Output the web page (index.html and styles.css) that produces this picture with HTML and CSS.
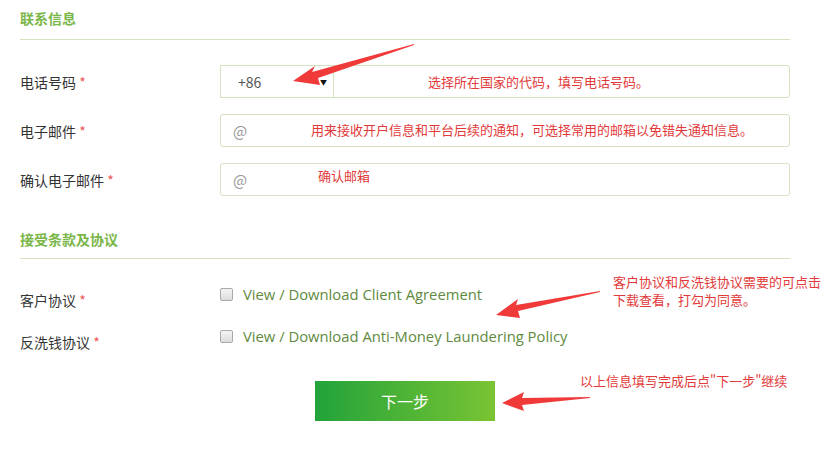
FILE: index.html
```html
<!DOCTYPE html>
<html lang="zh">
<head>
<meta charset="utf-8">
<link rel="stylesheet" href="styles.css">
</head>
<body>
<div class="page">
  <div class="section-head">联系信息</div>
  <div class="form">
    <div class="row">
      <label class="label">电话号码 <span class="req">*</span></label>
      <div class="field phone">
        <div class="select"><span>+86</span><span class="caret">▼</span></div>
        <div class="phone-input"></div>
      </div>
    </div>
    <div class="row">
      <label class="label">电子邮件 <span class="req">*</span></label>
      <div class="field"><span class="at">@</span></div>
    </div>
    <div class="row">
      <label class="label">确认电子邮件 <span class="req">*</span></label>
      <div class="field"><span class="at">@</span></div>
    </div>
  </div>
  <div class="section-head second">接受条款及协议</div>
  <div class="terms">
    <div class="trow">
      <label class="label">客户协议 <span class="req">*</span></label>
      <div class="check"><span class="box"></span><span class="link">View / Download Client Agreement</span></div>
    </div>
    <div class="trow">
      <label class="label">反洗钱协议 <span class="req">*</span></label>
      <div class="check"><span class="box"></span><span class="link">View / Download Anti-Money Laundering Policy</span></div>
    </div>
  </div>
  <div class="actions"><button class="next">下一步</button></div>

  <div class="note n1">选择所在国家的代码，填写电话号码。</div>
  <div class="note n2">用来接收开户信息和平台后续的通知，可选择常用的邮箱以免错失通知信息。</div>
  <div class="note n3">确认邮箱</div>
  <div class="note n4"><div>客户协议和反洗钱协议需要的可点击</div><div>下载查看，打勾为同意。</div></div>
  <div class="note n5">以上信息填写完成后点"下一步"继续</div>

  <svg class="arrows" width="825" height="451" viewBox="0 0 825 451">
    <polygon fill="#f03a3a" points="414,44 312,72 315,66 293,81 320,85 318,78 414,45"/>
    <polygon fill="#f03a3a" points="600,291 516,305 518,299 496,315 520,318 518,311 600,292"/>
    <polygon fill="#f03a3a" points="590,397 522,398 524,392 502,403 524,411 522,405 590,398"/>
  </svg>
</div>
</body>
</html>
```
FILE: styles.css
```css
* { box-sizing: border-box; }
html, body { margin: 0; padding: 0; background: #fff; }
body {
  font-family: "Noto Sans CJK SC", "Noto Sans", sans-serif;
  color: #333;
  font-size: 14px;
}
.page {
  position: relative;
  width: 825px;
  height: 451px;
  padding: 0 35px 0 20px;
  overflow: hidden;
}
.section-head {
  color: #7ab648;
  font-weight: bold;
  font-size: 14px;
  line-height: 20px;
  padding-top: 8px;
  padding-bottom: 11px;
  border-bottom: 1px solid #d3e3bd;
}
.section-head.second {
  margin-top: 25px;
  padding-bottom: 9px;
}
.form {
  display: flex;
  flex-direction: column;
  gap: 16px;
  margin-top: 25px;
}
.row {
  display: grid;
  grid-template-columns: 200px 1fr;
  align-items: center;
  height: 33px;
}
.label { font-size: 14px; color: #333; line-height: 20px; }
.req { color: #e55; }
.field {
  height: 33px;
  border: 1px solid #d3e3c0;
  border-radius: 3px;
  display: flex;
  align-items: center;
  padding-left: 12px;
}
.at { color: #999; font-size: 15px; }
.field.phone { padding-left: 0; border-radius: 0 3px 3px 0; }
.select {
  width: 113px;
  height: 100%;
  border-right: 1px solid #d3e3c0;
  display: flex;
  align-items: center;
  justify-content: space-between;
  padding: 0 6px 0 17px;
  color: #555;
  font-size: 14px;
}
.caret { font-size: 7px; color: #111; }
.phone-input { flex: 1; }
.terms {
  margin-top: 24px;
  display: flex;
  flex-direction: column;
  gap: 12px;
}
.trow {
  display: grid;
  grid-template-columns: 200px 1fr;
  height: 30px;
}
.trow .label { padding-top: 7px; }
.check { display: flex; align-items: center; gap: 10px; height: 20px; margin-top: 1px; }
.box {
  width: 13px; height: 13px;
  border: 1px solid #a9a9a9;
  border-radius: 2px;
  background: linear-gradient(#f4f4f4, #dcdcdc);
}
.link {
  font-family: "Open Sans", sans-serif;
  font-size: 14.8px;
  color: #5f8a3e;
}
.actions {
  display: flex;
  justify-content: center;
  margin-top: 26px;
}
.next {
  width: 180px;
  height: 40px;
  border: 0;
  color: #fff;
  font-family: "Noto Sans CJK SC", sans-serif;
  font-size: 16px;
  background: linear-gradient(to right, #22a33a, #7ac433);
}
.note {
  position: absolute;
  color: #e23a3a;
  font-size: 13px;
  line-height: 16px;
  white-space: nowrap;
}
.n1 { left: 428px; top: 74px; }
.n2 { left: 311px; top: 122px; }
.n3 { left: 318px; top: 168px; }
.n4 { left: 613px; top: 273px; line-height: 18px; }
.n5 { left: 580px; top: 373px; }
.arrows { position: absolute; left: 0; top: 0; pointer-events: none; }
```
